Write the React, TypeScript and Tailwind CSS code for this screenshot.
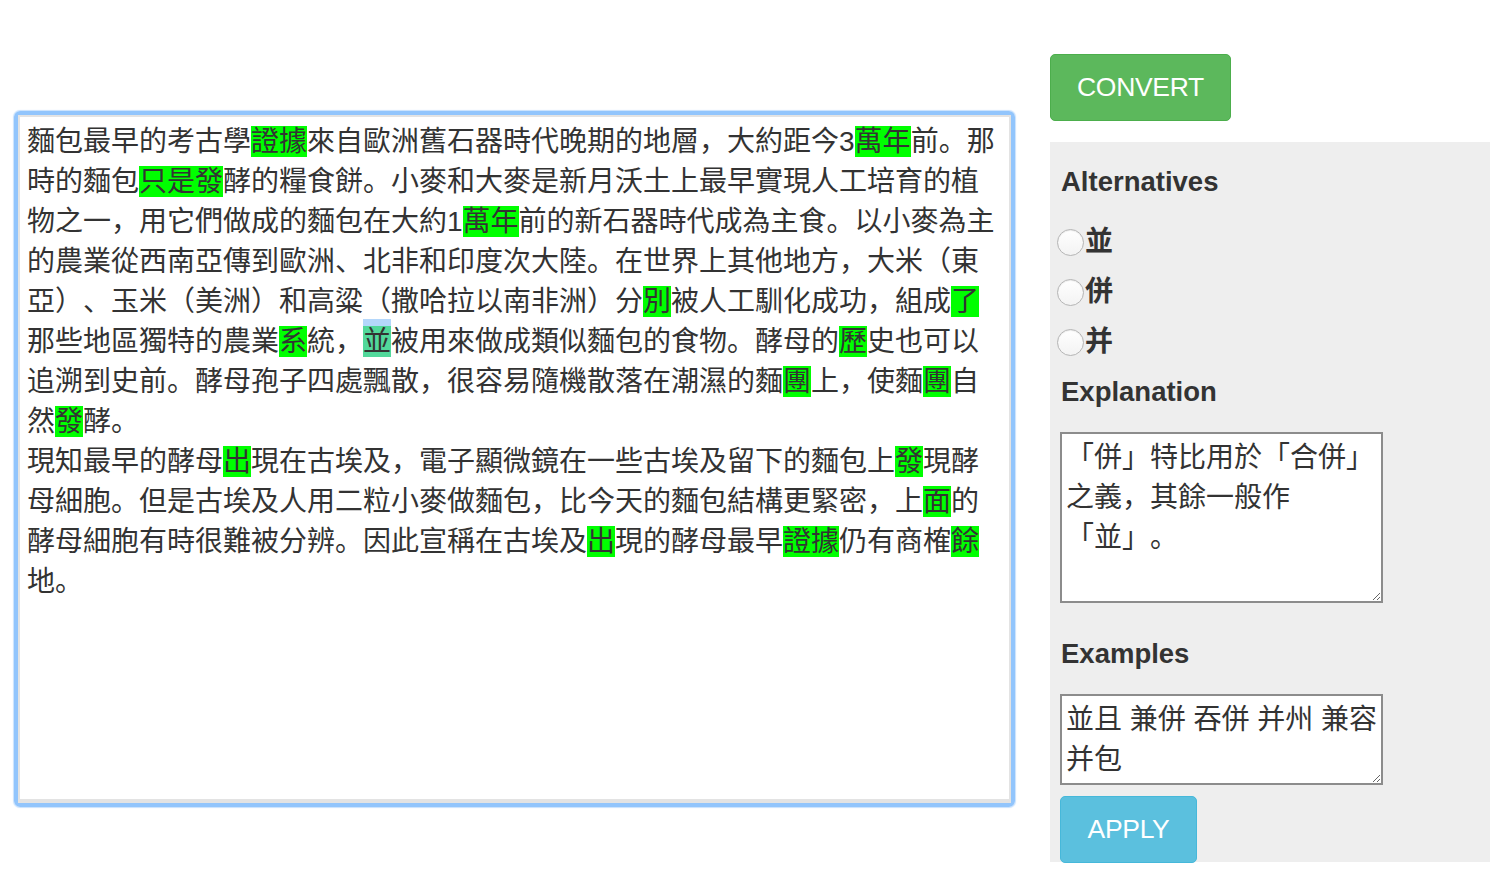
import React from "react";

const FONT = '"Liberation Sans", "Noto Sans CJK SC", sans-serif';

type Seg = string | { h: string; sel?: boolean };

const para1: Seg[] = [
    "麵包最早的考古學", { h: "證據" }, "來自歐洲舊石器時代晚期的地層，大約距今3", { h: "萬年" }, "前。那時的麵包",
    { h: "只是發" }, "酵的糧食餅。小麥和大麥是新月沃土上最早實現人工培育的植物之一，用它們做成的麵包在大約1",
    { h: "萬年" }, "前的新石器時代成為主食。以小麥為主的農業從西南亞傳到歐洲、北非和印度次大陸。在世界上其他地方，大米（東亞）、玉米（美洲）和高粱（撒哈拉以南非洲）分",
    { h: "別" }, "被人工馴化成功，組成", { h: "了" }, "那些地區獨特的農業", { h: "系" }, "統，", { h: "並", sel: true },
    "被用來做成類似麵包的食物。酵母的", { h: "歷" }, "史也可以追溯到史前。酵母孢子四處飄散，很容易隨機散落在潮濕的麵",
    { h: "團" }, "上，使麵", { h: "團" }, "自然", { h: "發" }, "酵。",
];

const para2: Seg[] = [
    "現知最早的酵母", { h: "出" }, "現在古埃及，電子顯微鏡在一些古埃及留下的麵包上", { h: "發" },
    "現酵母細胞。但是古埃及人用二粒小麥做麵包，比今天的麵包結構更緊密，上", { h: "面" },
    "的酵母細胞有時很難被分辨。因此宣稱在古埃及", { h: "出" }, "現的酵母最早", { h: "證據" }, "仍有商榷", { h: "餘" }, "地。",
];

function Para({ segs }: { segs: Seg[] }) {
    return (
        <div>
            {segs.map((s, i) =>
                typeof s === "string" ? (
                    <span key={i}>{s}</span>
                ) : s.sel ? (
                    <span key={i} className="bg-[#52d89b] shadow-[0_-7px_0_#b4d7fb]">{s.h}</span>
                ) : (
                    <span key={i} className="bg-[#00ff00]">{s.h}</span>
                )
            )}
        </div>
    );
}

function Radio({ label }: { label: string }) {
    return (
        <label className="flex h-[50px] items-center ml-[-3px]">
            <span className="w-[27px] h-[27px] rounded-full border border-[#b5b5b5] bg-gradient-to-b from-white to-[#f3f3f3] shadow-[inset_0_1px_1px_rgba(0,0,0,0.08)]" />
            <span className="ml-[1px] text-[28px] font-bold leading-[40px] text-[#333]">{label}</span>
        </label>
    );
}

export default function App() {
    return (
        <div className="flex min-h-[880px] bg-white text-[#333] [text-spacing-trim:space-all]" style={{ fontFamily: FONT }}>
            <div className="pl-[14px] pt-[111px]">
                <div className="w-[1001px] h-[696px] rounded-[6px] border-4 border-[#92c5fc] shadow-[0_0_1px_1px_#c8e1fd]">
                    <div className="h-full border-2 border-b-4 border-[#e3e3e3] bg-white pl-[7px] pr-[8px] pt-[5px] text-[28px] leading-[40px] text-[#333]">
                        <Para segs={para1} />
                        <Para segs={para2} />
                    </div>
                </div>
            </div>

            <div className="ml-[35px] pt-[54px]">
                <button className="w-[181px] h-[67px] rounded-[5px] border border-[#4cae4c] bg-[#5cb85c] text-[26.5px] text-white tracking-[-0.3px]">
                    CONVERT
                </button>

                <div className="mt-[21px] w-[440px] h-[720px] bg-[#eeeeee] pl-[10px] pt-[20px]">
                    <h3 className="h-[40px] leading-[40px] text-[27.5px] font-bold pl-[1px]">Alternatives</h3>
                    <div className="mt-[15px]">
                        <Radio label="並" />
                        <Radio label="併" />
                        <Radio label="并" />
                    </div>
                    <h3 className="mt-[5px] h-[40px] leading-[40px] text-[27.5px] font-bold pl-[1px]">Explanation</h3>
                    <textarea
                        readOnly
                        defaultValue="「併」特比用於「合併」之義，其餘一般作「並」。"
                        className="block mt-[20px] w-[323px] h-[171px] border-2 border-[#8c8c8c] bg-white pl-[4px] pr-[1px] pt-[4px] text-[28px] leading-[40px] text-[#333] outline-none [text-spacing-trim:space-all]"
                        style={{ fontFamily: FONT }}
                    />
                    <h3 className="mt-[31px] h-[40px] leading-[40px] text-[27.5px] font-bold pl-[1px]">Examples</h3>
                    <textarea
                        readOnly
                        defaultValue="並且 兼併 吞併 并州 兼容并包"
                        className="block mt-[20px] w-[323px] h-[91px] border-2 border-[#8c8c8c] bg-white pl-[4px] pr-[1px] pt-[4px] pb-0 text-[28px] leading-[40px] text-[#333] outline-none"
                        style={{ fontFamily: FONT }}
                    />
                    <button className="mt-[11px] w-[137px] h-[67px] rounded-[5px] border border-[#46b8da] bg-[#5bc0de] text-[26.5px] text-white tracking-[-0.3px]">
                        APPLY
                    </button>
                </div>
            </div>
        </div>
    );
}
